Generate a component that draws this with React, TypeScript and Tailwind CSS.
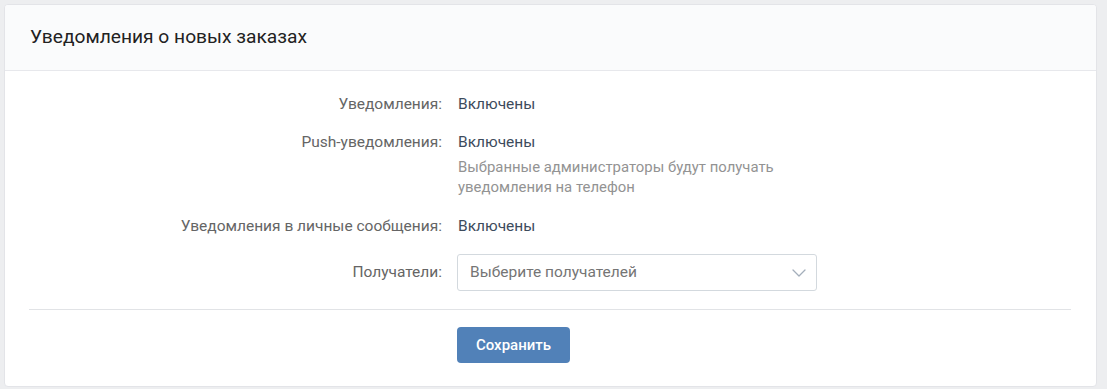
import React from "react";

export default function App() {
  const font = { fontFamily: "Roboto, 'Noto Sans', sans-serif" };
  return (
    <div className="w-[1107px] h-[389px] bg-[#edeef0] pt-[4px] pl-[4px] pr-[10px]" style={font}>
      <div className="w-[1093px] h-[383px] bg-white border border-[#e3e4e8] rounded-[4px] overflow-hidden flex flex-col">
        <div className="h-[66px] bg-[#fafbfc] border-b border-[#e7e8ec] flex items-center pl-[25px] text-[19.2px] text-[#222222]">
          Уведомления о новых заказах
        </div>
        <div className="px-[24px] pt-[23px] flex flex-col text-[15.5px]">
          <div className="flex h-[20px] items-center leading-[20px]">
            <div className="w-[413px] text-right text-[#656565]">Уведомления:</div>
            <div className="pl-[16px] text-[#3d4b5c]">Включены</div>
          </div>
          <div className="flex mt-[18px] leading-[20px]">
            <div className="w-[413px] text-right text-[#656565]">Push-уведомления:</div>
            <div className="pl-[16px]">
              <div className="text-[#3d4b5c]">Включены</div>
              <div className="text-[#939393] mt-[5px] text-[14.9px]">
                Выбранные администраторы будут получать
                <br />
                уведомления на телефон
              </div>
            </div>
          </div>
          <div className="flex mt-[19px] leading-[20px]">
            <div className="w-[413px] text-right text-[#656565]">Уведомления в личные сообщения:</div>
            <div className="pl-[16px] text-[#3d4b5c]">Включены</div>
          </div>
          <div className="flex mt-[18px] items-center">
            <div className="w-[413px] text-right text-[#656565]">Получатели:</div>
            <div className="pl-[15px]">
              <div className="w-[360px] h-[37px] border border-[#d3d9de] rounded-[3px] flex items-center justify-between pl-[12px] pr-[10px] text-[#757575]">
                <span>Выберите получателей</span>
                <svg width="14" height="8" viewBox="0 0 14 8" fill="none">
                  <path d="M1 1l6 6 6-6" stroke="#a4aebb" strokeWidth="1.3" strokeLinecap="round" strokeLinejoin="round" />
                </svg>
              </div>
            </div>
          </div>
          <div className="h-px bg-[#e1e3e6] mt-[18px] mr-[1px]" />
          <div className="flex mt-[17px]">
            <div className="w-[413px]" />
            <div className="pl-[15px]">
              <button className="h-[36px] w-[113px] bg-[#5181b8] rounded-[4px] text-white text-[15px] font-medium">
                Сохранить
              </button>
            </div>
          </div>
        </div>
      </div>
    </div>
  );
}
